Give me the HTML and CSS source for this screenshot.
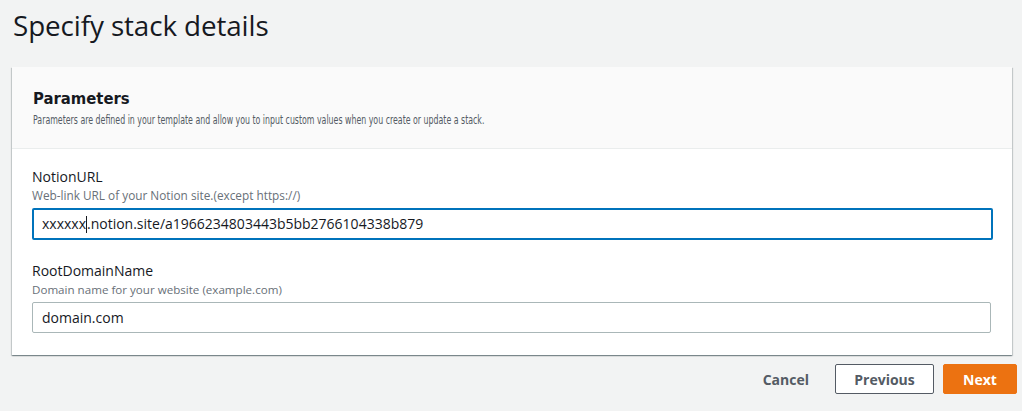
FILE: index.html
```html
<!DOCTYPE html>
<html>
<head>
<meta charset="utf-8">
<link rel="stylesheet" href="styles.css">
</head>
<body>
<div class="page">
  <h1 class="title">Specify stack details</h1>
  <div class="panel">
    <div class="panel-header">
      <h2 class="panel-title">Parameters</h2>
      <p class="panel-desc"><span class="narrow">Parameters are defined in your template and allow you to input custom values when you create or update a stack.</span></p>
    </div>
    <div class="panel-body">
      <div class="field">
        <div class="label">NotionURL</div>
        <div class="hint">Web-link URL of your Notion site.(except https://)</div>
        <div class="input focused"><span>xxxxxx</span><span class="caret"></span><span>.notion.site/a1966234803443b5bb2766104338b879</span></div>
      </div>
      <div class="field field2">
        <div class="label">RootDomainName</div>
        <div class="hint hint-tight">Domain name for your website (example.com)</div>
        <div class="input plain">domain.com</div>
      </div>
    </div>
  </div>
  <div class="actions">
    <button class="btn link">Cancel</button>
    <button class="btn normal">Previous</button>
    <button class="btn primary">Next</button>
  </div>
</div>
</body>
</html>
```
FILE: styles.css
```css
html, body {
  margin: 0;
  padding: 0;
  background: #f2f3f3;
  font-family: "Open Sans", "Liberation Sans", sans-serif;
  color: #16191f;
}
.page {
  padding: 0 5px 0 12px;
}
.title {
  margin: 0;
  padding: 6px 0 0 1px;
  height: 67px;
  box-sizing: border-box;
  font-size: 27.8px;
  font-weight: 400;
  line-height: 38px;
  letter-spacing: -0.1px;
}
.panel {
  width: 1000px;
  background: #ffffff;
  box-shadow: 0 1px 1px 0 rgba(0,28,36,0.3), 1px 1px 1px 0 rgba(0,28,36,0.15), -1px 1px 1px 0 rgba(0,28,36,0.15);
}
.panel-header {
  background: #fafafa;
  border-bottom: 1px solid #eaeded;
  padding: 20px 20px 0 21px;
  height: 82px;
  box-sizing: border-box;
}
.panel-title {
  margin: 0;
  font-family: "DejaVu Sans Condensed", "Liberation Sans", sans-serif;
  font-stretch: condensed;
  font-size: 16.5px;
  font-weight: 700;
  line-height: 24px;
}
.panel-desc {
  margin: 1px 0 0;
  font-family: "DejaVu Sans Condensed", "Liberation Sans", sans-serif;
  font-stretch: condensed;
  font-size: 11.8px;
  line-height: 16px;
  color: #545b64;
  white-space: nowrap;
}
.narrow {
  display: inline-block;
  transform: scaleX(0.74);
  transform-origin: left center;
}
.panel-body {
  padding: 18px 20px 22px 20px;
}
.field .label {
  font-size: 14px;
  line-height: 20px;
  color: #16191f;
}
.field .hint {
  font-size: 11.8px;
  line-height: 17px;
  color: #687078;
  margin-bottom: 4px;
}
.field .hint-tight {
  font-size: 11.6px;
}
.field2 {
  margin-top: 21px;
}
.input {
  box-sizing: border-box;
  height: 32px;
  font-size: 14px;
  line-height: 20px;
  display: flex;
  align-items: center;
  padding: 0 9px;
}
.input.focused {
  width: 961px;
  border: 2px solid #0073bb;
  border-radius: 2px;
  padding-left: 8px;
}
.input.plain {
  width: 959px;
  height: 31px;
  border: 1px solid #aab7b8;
  border-radius: 2px;
}
.caret {
  display: inline-block;
  width: 1px;
  height: 17px;
  background: #16191f;
}
.actions {
  display: flex;
  justify-content: flex-end;
  align-items: center;
  gap: 9px;
  margin-top: 9px;
}
.btn {
  font-family: "Open Sans", "Liberation Sans", sans-serif;
  font-size: 14px;
  font-weight: 700;
  height: 30px;
  border-radius: 2px;
  cursor: pointer;
  padding: 0 10px;
}
.btn.link {
  background: transparent;
  border: none;
  color: #545b64;
  margin-right: 7px;
}
.btn.normal {
  background: #ffffff;
  border: 1px solid #545b64;
  color: #545b64;
  width: 99px;
}
.btn.primary {
  background: #ec7211;
  border: 1px solid #ec7211;
  color: #ffffff;
  width: 74px;
}
```
